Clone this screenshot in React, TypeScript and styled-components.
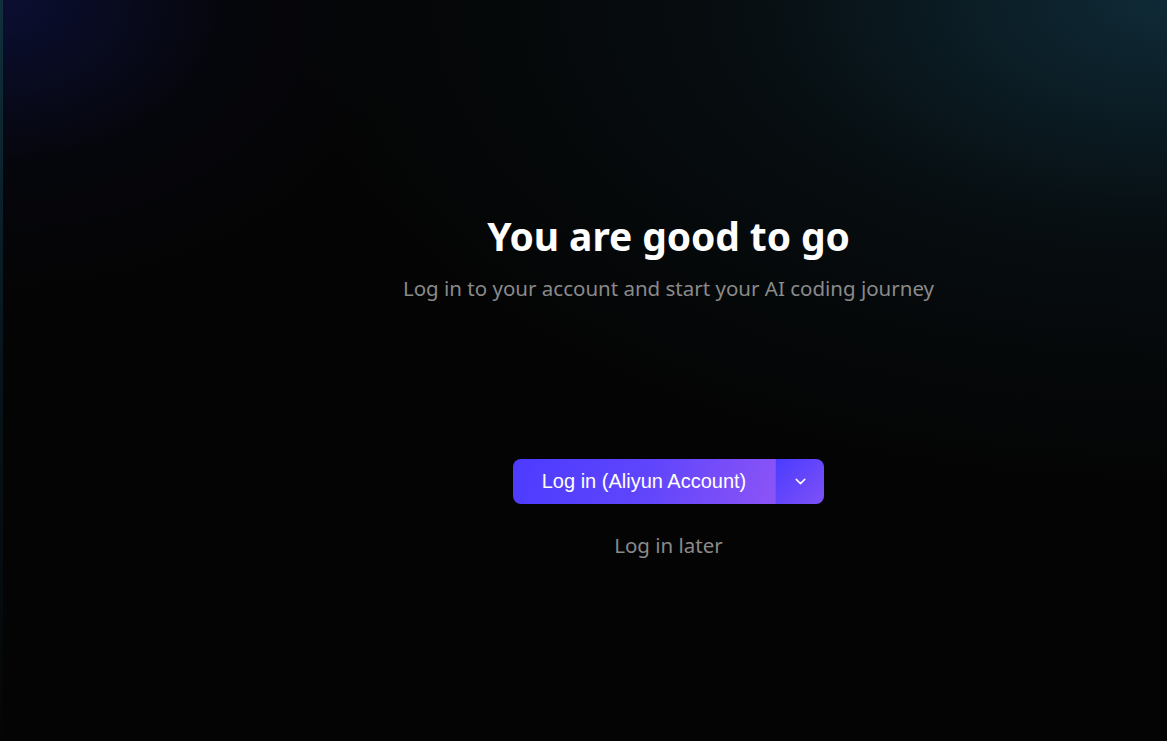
import styled, { createGlobalStyle } from 'styled-components'
import { ChevronDown } from 'lucide-react'

const GlobalStyle = createGlobalStyle`
  html, body {
    margin: 0;
    padding: 0;
    background: #050505;
  }
  * { box-sizing: border-box; }
`

export default function App() {
  return (
    <>
      <GlobalStyle />
      <Page>
        <EdgeStrip />
        <Content>
          <Title>You are good to go</Title>
          <Subtitle>Log in to your account and start your AI coding journey</Subtitle>
          <SplitButton>
            <MainButton>Log in (Aliyun Account)</MainButton>
            <DropButton aria-label="More login options">
              <ChevronDown size={17} strokeWidth={2} />
            </DropButton>
          </SplitButton>
          <LaterLink>Log in later</LaterLink>
        </Content>
      </Page>
    </>
  )
}

const Page = styled.div`
  display: flex;
  width: 100vw;
  height: 100vh;
  overflow: hidden;
  background:
    radial-gradient(ellipse 75% 65% at 100% 0%, rgba(16, 46, 60, 0.9), rgba(10, 24, 30, 0.45) 50%, transparent 100%),
    radial-gradient(ellipse 35% 40% at 0% 0%, rgba(12, 16, 56, 0.9), rgba(8, 10, 28, 0.35) 55%, transparent 100%),
    #040404;
`

const EdgeStrip = styled.div`
  width: 3px;
  flex: none;
  background: linear-gradient(180deg, #10303c 0%, #07141a 50%, #050505 100%);
`

const Content = styled.div`
  flex: 1;
  display: flex;
  flex-direction: column;
  align-items: center;
  padding-left: 167px;
  padding-top: 211px;
`

const Title = styled.h1`
  margin: 0;
  font-family: 'Noto Sans', 'Open Sans', sans-serif;
  font-weight: 700;
  font-size: 39px;
  line-height: 50px;
  color: #ffffff;
  letter-spacing: -0.1px;
`

const Subtitle = styled.p`
  margin: 13px 0 0;
  font-family: 'Noto Sans', 'Open Sans', sans-serif;
  font-size: 20.5px;
  line-height: 28px;
  color: #8a8a8a;
`

const SplitButton = styled.div`
  display: flex;
  margin-top: 157px;
  height: 45px;
  border-radius: 8px;
  overflow: hidden;
`

const MainButton = styled.button`
  width: 263px;
  border: none;
  padding: 0;
  font-family: 'Liberation Sans', Arial, sans-serif;
  font-size: 20px;
  color: #ffffff;
  background: linear-gradient(110deg, #4c3bff 0%, #5f45fc 50%, #8c54f6 100%);
  border-right: 1px solid rgba(255, 255, 255, 0.14);
  cursor: pointer;
`

const DropButton = styled.button`
  width: 48px;
  border: none;
  padding: 0;
  display: flex;
  align-items: center;
  justify-content: center;
  color: #ffffff;
  background: linear-gradient(135deg, #4a3cff 0%, #6a48fa 60%, #7d52f6 100%);
  cursor: pointer;
`

const LaterLink = styled.button`
  margin-top: 27px;
  border: none;
  background: none;
  padding: 0;
  font-family: 'Noto Sans', 'Open Sans', sans-serif;
  font-size: 20.5px;
  line-height: 28px;
  color: #8a8a8a;
  cursor: pointer;
`
